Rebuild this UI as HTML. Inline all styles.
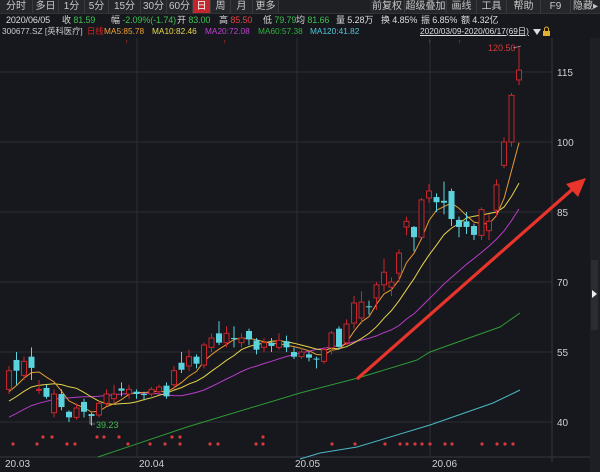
<!DOCTYPE html>
<html><head><meta charset="utf-8"><style>
body{margin:0;width:600px;height:472px;overflow:hidden;background:#16181d;font-family:"Liberation Sans","Noto Sans CJK SC",sans-serif;}
#top{position:absolute;left:0;top:0;width:600px;height:13px;background:#1f2024;border-bottom:1px solid #333;}
.tab{position:absolute;top:0;height:13px;line-height:13px;font-size:10px;color:#c8c8c8;text-align:center;border-right:1px solid #3a3a3e;background:#26272b;}
.sel{background:#c1272d;color:#fff;}
.i{position:absolute;top:14px;height:12px;font-size:9px;color:#ddd;white-space:nowrap;line-height:12px;letter-spacing:-0.1px}
.m{position:absolute;top:26px;height:11px;font-size:8.3px;white-space:nowrap;line-height:11px;}
.g{color:#3fbf4f}
svg{position:absolute;left:0;top:0;}
</style></head><body>
<div id="top">
<div class="tab" style="left:0;width:32px">分时</div>
<div class="tab" style="left:33px;width:25px">多日</div>
<div class="tab" style="left:59px;width:25px">1分</div>
<div class="tab" style="left:85px;width:23px">5分</div>
<div class="tab" style="left:109px;width:31px">15分</div>
<div class="tab" style="left:141px;width:25px">30分</div>
<div class="tab" style="left:167px;width:25px">60分</div>
<div class="tab sel" style="left:193px;width:17px">日</div>
<div class="tab" style="left:211px;width:19px">周</div>
<div class="tab" style="left:231px;width:21px">月</div>
<div class="tab" style="left:253px;width:25px">更多</div>
<div class="tab" style="left:370px;width:34px">前复权</div>
<div class="tab" style="left:405px;width:41px">超级叠加</div>
<div class="tab" style="left:447px;width:29px">画线</div>
<div class="tab" style="left:477px;width:29px">工具</div>
<div class="tab" style="left:507px;width:33px">帮助</div>
<div class="tab" style="left:541px;width:29px">F9</div>
<div class="tab" style="left:571px;width:29px;border:none">隐藏▸</div>
</div>
<div class="i" style="left:6px">2020/06/05</div>
<div class="i" style="left:62px">收 <span class="g">81.59</span></div>
<div class="i" style="left:111px">幅 <span class="g">-2.09%(-1.74)</span></div>
<div class="i" style="left:177px">开 <span class="g">83.00</span></div>
<div class="i" style="left:219px">高 <span style="color:#e04040">85.50</span></div>
<div class="i" style="left:263px">低 <span class="g">79.79</span></div>
<div class="i" style="left:296px">均 <span class="g">81.66</span></div>
<div class="i" style="left:336px">量 5.28万</div>
<div class="i" style="left:381px">换 4.85%</div>
<div class="i" style="left:421px">振 6.85%</div>
<div class="i" style="left:461px">额 4.32亿</div>
<div class="m" style="left:2px;color:#ccc">300677.SZ [英科医疗]</div>
<div class="m" style="left:87px;color:#e02020">日线</div>
<div class="m" style="left:104px;color:#f0a030">MA5:85.78</div>
<div class="m" style="left:152px;color:#e8d850">MA10:82.46</div>
<div class="m" style="left:205px;color:#c040d0">MA20:72.08</div>
<div class="m" style="left:258px;color:#30b040">MA60:57.38</div>
<div class="m" style="left:310px;color:#50c8d8">MA120:41.82</div>
<div class="m" style="left:420px;color:#ddd;text-decoration:underline;font-size:8.3px">2020/03/09-2020/06/17(69日)</div>
<svg width="600" height="472" id="s" style="z-index:-1"></svg>
<script>
var S=document.getElementById('s');var h='';
function Y(p){return 72+(115-p)*4.667;}
h+='<rect x="0" y="14" width="600" height="458" fill="#16181d"/>';
h+='<rect x="590" y="38" width="10" height="434" fill="#1d1f24"/><rect x="591" y="260" width="7" height="70" fill="#2a2c31"/>';
h+='<path d="M592 290 L597 294 L592 298Z" fill="#eee"/>';
[72,142,212,282,352,422].forEach(function(y,i){h+='<line x1="0" y1="'+y+'" x2="552" y2="'+y+'" stroke="#2c2e34"/>';
h+='<text x="557" y="'+(y+4)+'" font-size="10" fill="#cfcfcf">'+[115,100,85,70,55,40][i]+'</text>';});
[137,297,430].forEach(function(x){h+='<line x1="'+x+'" y1="38" x2="'+x+'" y2="457" stroke="#2c2e34"/>';});
h+='<line x1="552" y1="38" x2="552" y2="462" stroke="#35373d"/><line x1="0" y1="457" x2="590" y2="457" stroke="#35373d"/>';
[[3,'20.03'],[137,'20.04'],[293,'20.05'],[430,'20.06']].forEach(function(a){h+='<text x="'+(a[0]+2)+'" y="467" font-size="10" fill="#cfcfcf">'+a[1]+'</text>';});
var D=[[47,51,52,46],[53.3,51,55,48],[50,53,54,49],[54,51.6,56,49],[47,47,49,46],[47.3,45.4,48,45],[42,46,47,41],[46,43.2,47,42.5],[42.2,41,42.5,40],[41,43,44,40.5],[44.3,42.2,45,41],[41.7,41.3,42,39.23],[41.5,44,44.5,41],[44,46,47,43.5],[45,46,48,44],[47.2,46.7,48.5,45.5],[46,47,48,45],[46.5,46,47,45],[46,45.8,46.5,44.6],[46,47,47.5,45.5],[46.5,47.5,48,46],[47.8,45.5,48.5,45],[48,51,52,47],[52.7,51.2,55,50.5],[52,54,55.5,51],[54,52.5,54.5,51.5],[52.2,56.5,57,51.5],[56,58,59,55],[59,57,61.6,56.5],[57,59,60.5,56],[58,57.9,60.5,56],[57,58,59,56],[59.5,57.7,60,56.5],[57.5,55.5,58,54.5],[56,57,58,55],[57,56.3,58,55],[56,57.5,59,55.5],[57.3,56,58.5,55],[55,54,56,53.5],[54,55,56,53.5],[54.5,53.8,55,53],[53.6,53.5,54,51.5],[53,55.5,56,52.5],[55.9,59.1,59.5,54.5],[60,56.1,60.5,55.5],[57,61,62,56.5],[61.2,65.5,67,60],[62.3,65.7,68,61],[64.8,64.6,66,63],[66.6,69.4,70,64],[69.4,72.1,75,68],[68.9,70,71,67],[71.9,76.2,77,70],[81.8,83,84,80],[81.8,79.6,82,76.6],[79.6,87.6,88,79.5],[88,89.5,91,87],[88.2,87.1,89,85],[87.4,87,91.5,84.5],[89.5,83.5,90,82],[83.3,81.8,84,79.6],[83,81.8,85,80.3],[82,80.1,82.5,79],[80,85.5,86,79],[81,83,84.5,79],[85.4,90.8,92,84],[95,100,101,94.4],[100,110,110.5,99],[113.3,115.4,120.5,112.2]];
function X(i){return 9+i*7.5;}
var C=[];for(var k=0;k<20;k++)C.push(34+k*0.65);D.forEach(function(d){C.push(d[1]);});
function ma(n,col){var pts=[];for(var i=0;i<D.length;i++){var s=0;for(var j=0;j<n;j++)s+=C[i+20-j];pts.push(X(i).toFixed(1)+','+Y(s/n).toFixed(1));}
h+='<polyline points="'+pts.join(' ')+'" fill="none" stroke="'+col+'" stroke-width="1"/>';}
h+='<polyline points="98,457 187,427 300,393 358,378 417,360 430,352 483,333 500,327 520,313" fill="none" stroke="#2f9a38"/>';
h+='<polyline points="300,459 320,453 357,447 430,425 493,403 520,390" fill="none" stroke="#4cb8c4"/>';
ma(20,'#b83cc8');ma(10,'#e6d44a');ma(5,'#e89a35');
D.forEach(function(d,i){var x=X(i),o=d[0],c=d[1],up=c>=o;var col=up?'#c8262c':'#5bd3df';
h+='<line x1="'+x+'" y1="'+Y(d[2])+'" x2="'+x+'" y2="'+Y(d[3])+'" stroke="'+col+'"/>';
var t=Y(Math.max(o,c)),b=Y(Math.min(o,c));if(b-t<1)b=t+1;
if(up)h+='<rect x="'+(x-2.5)+'" y="'+t+'" width="5" height="'+(b-t)+'" fill="#16181d" stroke="'+col+'"/>';
else h+='<rect x="'+(x-3)+'" y="'+t+'" width="6" height="'+(b-t)+'" fill="'+col+'"/>';});
[13,37,67,75,128,150,165,180,210,218,256,263,332,355,385,400,407,415,422,430,445,452,482,497,505,513].forEach(function(x){h+='<circle cx="'+x+'" cy="444" r="1.6" fill="#d83a3a"/>';});
[43,52,97,104,119,172,180,263].forEach(function(x){h+='<circle cx="'+x+'" cy="437" r="1.6" fill="#d83a3a"/>';});
[127,225,430,460].forEach(function(x){h+='<text x="'+(x-2)+'" y="44" font-size="7" fill="#d03030">↑</text>';});
h+='<text x="96" y="428" font-size="9" fill="#3fbf4f">39.23</text><polyline points="90,415 90,424 95,424" fill="none" stroke="#ccc" stroke-width="0.6"/>';
h+='<text x="488" y="51" font-size="9" fill="#d83a3a">120.50</text><line x1="513" y1="48" x2="521" y2="46" stroke="#ccc" stroke-width="0.6"/>';
h+='<path d="M533 29 L541 29 L537 35Z" fill="#ddd"/><rect x="543" y="31" width="7" height="5" fill="#e0b030"/><path d="M544.5 31 v-2 a2 2 0 0 1 4 0 v2" fill="none" stroke="#e0b030"/>';
h+='<line x1="357" y1="379" x2="575" y2="187" stroke="#e8342a" stroke-width="3.2"/><path d="M586 178 L566 184 L578 197Z" fill="#e8342a"/>';
S.innerHTML=h;
</script>
</body></html>
